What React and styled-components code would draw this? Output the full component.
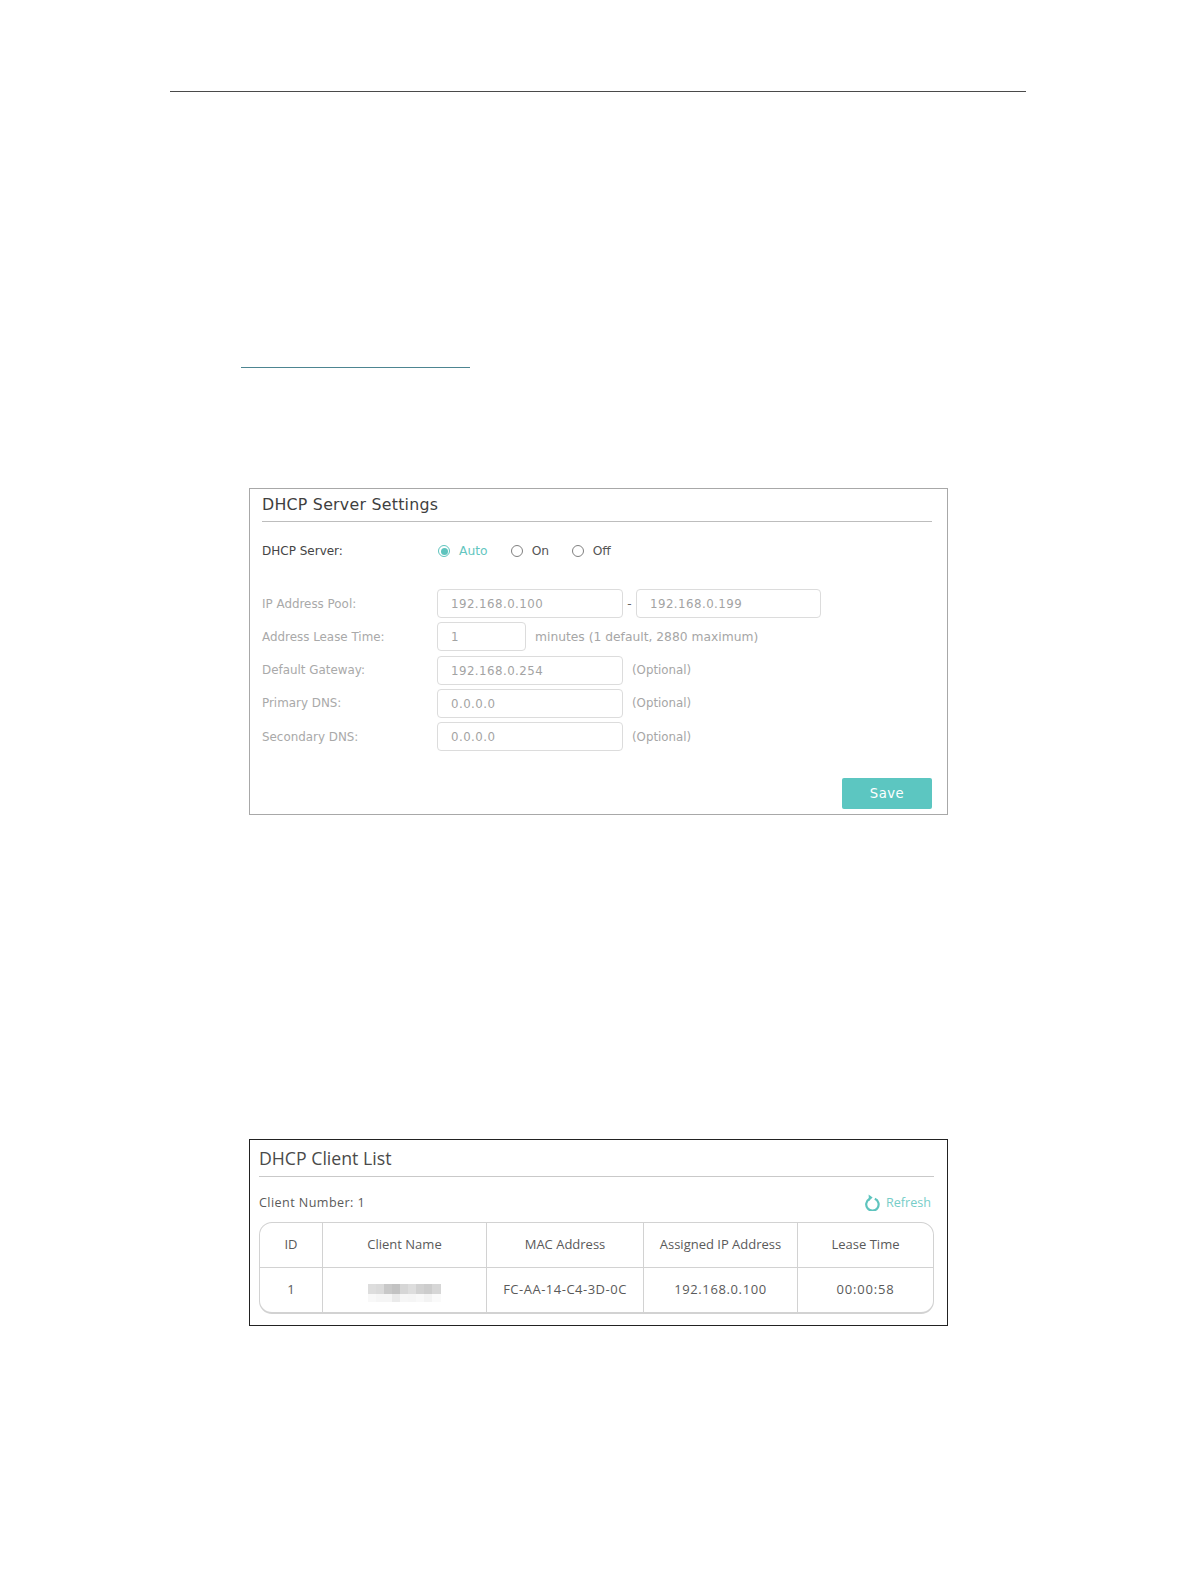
import styled, { createGlobalStyle } from "styled-components";

const GlobalStyle = createGlobalStyle`
  html, body {
    margin: 0;
    padding: 0;
    background: #fff;
  }
`;

const Page = styled.div`
  width: 1196px;
  height: 1582px;
  box-sizing: border-box;
  padding: 91px 0 0 170px;
  overflow: hidden;
`;

const HeaderRule = styled.div`
  width: 856px;
  height: 1px;
  background: #4a4a4a;
`;

const LinkRule = styled.div`
  width: 229px;
  height: 1px;
  margin: 275px 0 0 71px;
  background: #4d8591;
`;

const Panel = styled.section`
  width: 699px;
  height: ${({ $height }) => $height}px;
  box-sizing: border-box;
  margin: ${({ $top }) => $top}px 0 0 79px;
  padding: ${({ $padding }) => $padding};
  border: 1px solid ${({ $border }) => $border};
  font-family: "DejaVu Sans", Verdana, sans-serif;
`;

const PanelTitle = styled.h2`
  height: 33px;
  box-sizing: border-box;
  margin: 0;
  border-bottom: 1px solid #bdbdbd;
  font-size: 15.8px;
  font-weight: 400;
  line-height: 31px;
  letter-spacing: 0.25px;
  color: #3f3f3f;
`;

const RadioRow = styled.div`
  display: flex;
  align-items: center;
  height: 28px;
  margin-top: 15px;
`;

const RowLabel = styled.span`
  flex: none;
  width: 175px;
  font-size: ${({ $muted }) => ($muted ? 11.9 : 12)}px;
  color: ${({ $muted }) => ($muted ? "#a9a9a9" : "#444")};
`;

const RadioOption = styled.span`
  flex: none;
  display: flex;
  align-items: center;
  gap: 9px;
  width: ${({ $width }) => $width}px;
  font-size: 12.3px;
  color: ${({ $active }) => ($active ? "#63c6c0" : "#555")};
`;

const RadioGroup = styled.div`
  display: flex;
  padding-left: 1px;
`;

const RadioCircle = styled.span`
  flex: none;
  display: flex;
  align-items: center;
  justify-content: center;
  width: 12px;
  height: 12px;
  box-sizing: border-box;
  border: 1px solid ${({ $active }) => ($active ? "#5ec4be" : "#808080")};
  border-radius: 50%;
  &::after {
    content: "";
    display: ${({ $active }) => ($active ? "block" : "none")};
    width: 7px;
    height: 7px;
    border-radius: 50%;
    background: #5ec4be;
  }
`;

const FormRows = styled.div`
  display: flex;
  flex-direction: column;
  gap: 4.3px;
  margin-top: 24px;
`;

const FormRow = styled.div`
  display: flex;
  align-items: center;
  height: 29px;
`;

const FieldBox = styled.div`
  flex: none;
  width: ${({ $width }) => $width}px;
  height: 29px;
  box-sizing: border-box;
  padding-left: 13px;
  border: 1px solid #dcdcdc;
  border-radius: 4px;
  font-size: 11.8px;
  line-height: 28.5px;
  letter-spacing: 0.45px;
  color: #a3a3a3;
`;

const Dash = styled.span`
  width: 13px;
  font-size: 12px;
  text-align: center;
  color: #666;
`;

const Hint = styled.span`
  margin-left: ${({ $gap }) => $gap}px;
  font-size: ${({ $size }) => $size}px;
  color: #a6a6a6;
`;

const SaveRow = styled.div`
  display: flex;
  justify-content: flex-end;
  margin-top: 27px;
`;

const SaveButton = styled.button`
  width: 90px;
  height: 31px;
  padding: 0;
  border: 0;
  border-radius: 2px;
  background: #5cc6c1;
  color: #fff;
  font: 13.2px "DejaVu Sans", Verdana, sans-serif;
  letter-spacing: 0.5px;
`;

const ClientTitle = styled.h2`
  height: 37px;
  box-sizing: border-box;
  margin: 0;
  border-bottom: 1px solid #c9c9c9;
  font: 400 17.7px/36px "Open Sans", Tahoma, sans-serif;
  color: #4a4a4a;
`;

const ClientBar = styled.div`
  display: flex;
  align-items: center;
  justify-content: space-between;
  height: 45px;
  padding-top: 5px;
  box-sizing: border-box;
  font: 12.6px "Open Sans", Tahoma, sans-serif;
  color: #5a5a5a;
`;

const ClientCount = styled.span`
  letter-spacing: 0.42px;
`;

const RefreshLink = styled.span`
  display: flex;
  align-items: center;
  gap: 6px;
  margin-right: 3px;
  color: #76cdc8;
`;

const ClientTable = styled.div`
  display: grid;
  grid-template-columns: 63px 164px 157px 154px 1fr;
  grid-template-rows: 45px 44px;
  height: 92px;
  box-sizing: border-box;
  border: 1px solid #d2d2d2;
  border-bottom-width: 2px;
  border-radius: 13px;
  overflow: hidden;
  font: 13px "Open Sans", Tahoma, sans-serif;
  color: #5a5a5a;
`;

const Cell = styled.div`
  display: flex;
  align-items: center;
  justify-content: center;
  padding-bottom: 2px;
  letter-spacing: ${({ $spacing }) => $spacing || 0}px;
  border-right: ${({ $last }) => ($last ? "0" : "1px solid #d2d2d2")};
  border-bottom: ${({ $bottom }) => ($bottom ? "0" : "1px solid #d2d2d2")};
`;

const BlurSwatch = styled.svg`
  margin-top: 8px;
  filter: blur(0.7px);
`;

const BLUR_BLOCKS = [
  [0, 0, 8, 10, 0.2], [8, 0, 8, 10, 0.22], [16, 0, 8, 10, 0.32], [24, 0, 8, 10, 0.36],
  [32, 0, 8, 10, 0.24], [40, 0, 8, 10, 0.2], [48, 0, 8, 10, 0.27], [56, 0, 8, 10, 0.3], [64, 0, 9, 10, 0.24],
  [0, 10, 8, 8, 0.04], [8, 10, 8, 8, 0.06], [16, 10, 8, 8, 0.06], [24, 10, 8, 8, 0.12],
  [32, 10, 8, 8, 0.05], [40, 10, 8, 8, 0.06], [48, 10, 8, 8, 0.04], [56, 10, 8, 8, 0.07], [64, 10, 9, 8, 0.03],
];

function BlurredName() {
  return (
    <BlurSwatch width="73" height="18" viewBox="0 0 73 18" aria-hidden="true">
      {BLUR_BLOCKS.map(([x, y, w, h, o]) => (
        <rect key={`${x}-${y}`} x={x} y={y} width={w} height={h} fill="#555" opacity={o} />
      ))}
    </BlurSwatch>
  );
}

function RefreshIcon() {
  return (
    <svg width="15" height="17" viewBox="0 0 15 17" aria-hidden="true">
      <path d="M4.4 5A6.2 6.2 0 1 0 9.8 4.7" fill="none" stroke="#5ec4be" strokeWidth="2.2" />
      <path d="M3.6 0.4 7.6 3.4 4 7Z" fill="#5ec4be" />
    </svg>
  );
}

const FIELDS = [
  { label: "Default Gateway:", value: "192.168.0.254" },
  { label: "Primary DNS:", value: "0.0.0.0" },
  { label: "Secondary DNS:", value: "0.0.0.0" },
];

const COLUMNS = ["ID", "Client Name", "MAC Address", "Assigned IP Address", "Lease Time"];

export default function App() {
  return (
    <>
      <GlobalStyle />
      <Page>
        <HeaderRule />
        <LinkRule />

        <Panel $top={120} $height={327} $border="#a8a8a8" $padding="0 15px 0 12px">
          <PanelTitle>DHCP Server Settings</PanelTitle>
          <RadioRow>
            <RowLabel>DHCP Server:</RowLabel>
            <RadioGroup>
              <RadioOption $active $width={72.7}>
                <RadioCircle $active />
                Auto
              </RadioOption>
              <RadioOption $width={61}>
                <RadioCircle />
                On
              </RadioOption>
              <RadioOption $width={50}>
                <RadioCircle />
                Off
              </RadioOption>
            </RadioGroup>
          </RadioRow>

          <FormRows>
            <FormRow>
              <RowLabel $muted>IP Address Pool:</RowLabel>
              <FieldBox $width={186}>192.168.0.100</FieldBox>
              <Dash>-</Dash>
              <FieldBox $width={185}>192.168.0.199</FieldBox>
            </FormRow>
            <FormRow>
              <RowLabel $muted>Address Lease Time:</RowLabel>
              <FieldBox $width={89}>1</FieldBox>
              <Hint $gap={9} $size={12.3}>minutes (1 default, 2880 maximum)</Hint>
            </FormRow>
            {FIELDS.map((field) => (
              <FormRow key={field.label}>
                <RowLabel $muted>{field.label}</RowLabel>
                <FieldBox $width={186}>{field.value}</FieldBox>
                <Hint $gap={9} $size={11.8}>(Optional)</Hint>
              </FormRow>
            ))}
          </FormRows>

          <SaveRow>
            <SaveButton>Save</SaveButton>
          </SaveRow>
        </Panel>

        <Panel $top={324} $height={187} $border="#222" $padding="0 13px 0 9px">
          <ClientTitle>DHCP Client List</ClientTitle>
          <ClientBar>
            <ClientCount>Client Number: 1</ClientCount>
            <RefreshLink>
              <RefreshIcon />
              Refresh
            </RefreshLink>
          </ClientBar>
          <ClientTable>
            {COLUMNS.map((column, index) => (
              <Cell key={column} $last={index === COLUMNS.length - 1}>
                {column}
              </Cell>
            ))}
            <Cell $bottom>1</Cell>
            <Cell $bottom>
              <BlurredName />
            </Cell>
            <Cell $bottom $spacing={0.5}>FC-AA-14-C4-3D-0C</Cell>
            <Cell $bottom $spacing={0.62}>192.168.0.100</Cell>
            <Cell $bottom $last $spacing={0.8}>
              00:00:58
            </Cell>
          </ClientTable>
        </Panel>
      </Page>
    </>
  );
}
